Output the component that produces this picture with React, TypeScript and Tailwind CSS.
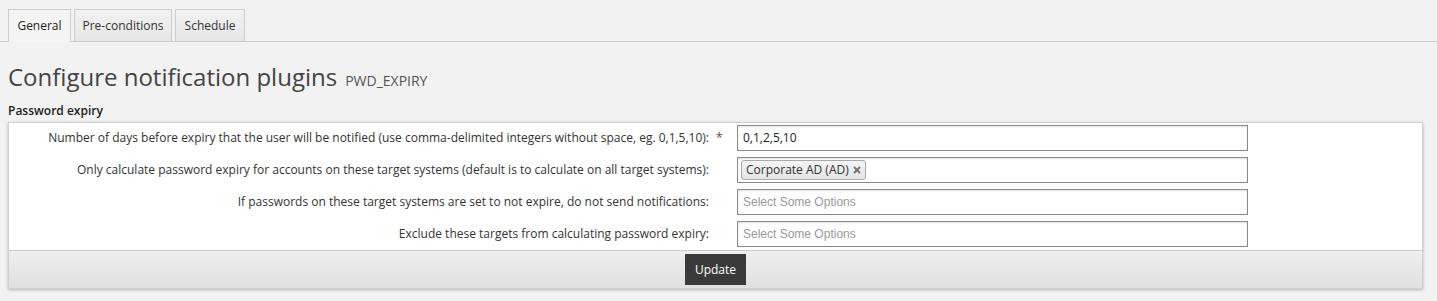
import { X } from 'lucide-react';

const rows = [
  {
    label:
      'Number of days before expiry that the user will be notified (use comma-delimited integers without space, eg. 0,1,5,10):',
    required: true,
    kind: 'text',
  },
  {
    label:
      'Only calculate password expiry for accounts on these target systems (default is to calculate on all target systems):',
    kind: 'chips',
  },
  {
    label: 'If passwords on these target systems are set to not expire, do not send notifications:',
    kind: 'empty',
  },
  {
    label: 'Exclude these targets from calculating password expiry:',
    kind: 'empty',
  },
];

function Field({ kind }: { kind: string }) {
  const base =
    'ml-[14px] w-[511px] h-[26px] border border-[#8a8a8a] bg-white shadow-[inset_0_1px_2px_rgba(0,0,0,0.12)] flex items-center';
  if (kind === 'text') {
    return <div className={`${base} px-[5px] text-[12px] text-[#222]`}>0,1,2,5,10</div>;
  }
  if (kind === 'chips') {
    return (
      <div className={`${base} px-[3px]`}>
        <span className="flex items-center h-[20px] pl-[4px] pr-[3px] border border-[#aaa] rounded-[3px] bg-gradient-to-b from-[#f4f4f4] to-[#e4e4e4] text-[12px] text-[#333]">
          Corporate AD (AD)
          <X className="w-[10px] h-[10px] ml-[3px] text-[#777]" strokeWidth={4.5} />
        </span>
      </div>
    );
  }
  return (
    <div className={`${base} px-[5px] text-[12px] text-[#999] font-['Liberation_Sans',Arial,sans-serif]`}>
      Select Some Options
    </div>
  );
}

export default function App() {
  return (
    <div className="min-h-[301px] bg-[#f2f2f2] font-['Open_Sans',sans-serif] text-[#333]">
      <div className="flex items-end gap-[3px] pt-[9px] px-[8px] border-b border-[#cdcdcd] h-[42px]">
        <div className="h-[33px] w-[63px] -mb-px border border-[#cdcdcd] border-b-0 bg-[#f4f4f4] flex items-center justify-center text-[12px] text-[#222]">
          General
        </div>
        <div className="h-[32px] w-[98px] border border-[#cdcdcd] border-b-0 bg-gradient-to-b from-[#f2f2f2] to-[#e6e6e6] flex items-center justify-center text-[12px] text-[#333]">
          Pre-conditions
        </div>
        <div className="h-[32px] w-[70px] border border-[#cdcdcd] border-b-0 bg-gradient-to-b from-[#f2f2f2] to-[#e6e6e6] flex items-center justify-center text-[12px] text-[#333]">
          Schedule
        </div>
      </div>

      <div className="px-[8px]">
        <h1 className="mt-[20px] text-[24px] leading-[30px] text-[#444] flex items-baseline">
          Configure notification plugins
          <span className="ml-[8px] text-[14px] text-[#555] uppercase">pwd_expiry</span>
        </h1>
        <div className="mt-[7px] text-[12px] font-semibold text-[#222] leading-[16px]">Password expiry</div>

        <div className="mt-[3px] w-[1415px] border border-[#d0d0d0] bg-white shadow-[0_1px_3px_rgba(0,0,0,0.25)]">
          <div className="flex flex-col gap-[6px] pt-[2px] pb-[3px]">
            {rows.map((r) => (
              <div key={r.label} className="flex items-center">
                <div className="w-[714px] flex items-center justify-end text-[12px] text-[#333]">
                  <span>{r.label}</span>
                  <span className="w-[14px] text-right text-[#8b3a3a] text-[13px]">{r.required ? '*' : ''}</span>
                </div>
                <Field kind={r.kind} />
              </div>
            ))}
          </div>
          <div className="border-t border-[#ccc] h-[38px] bg-gradient-to-b from-[#efefef] to-[#e0e0e0] flex items-center justify-center">
            <button className="h-[31px] w-[61px] bg-[#3a3a3a] text-white text-[12px]">Update</button>
          </div>
        </div>
      </div>
    </div>
  );
}
